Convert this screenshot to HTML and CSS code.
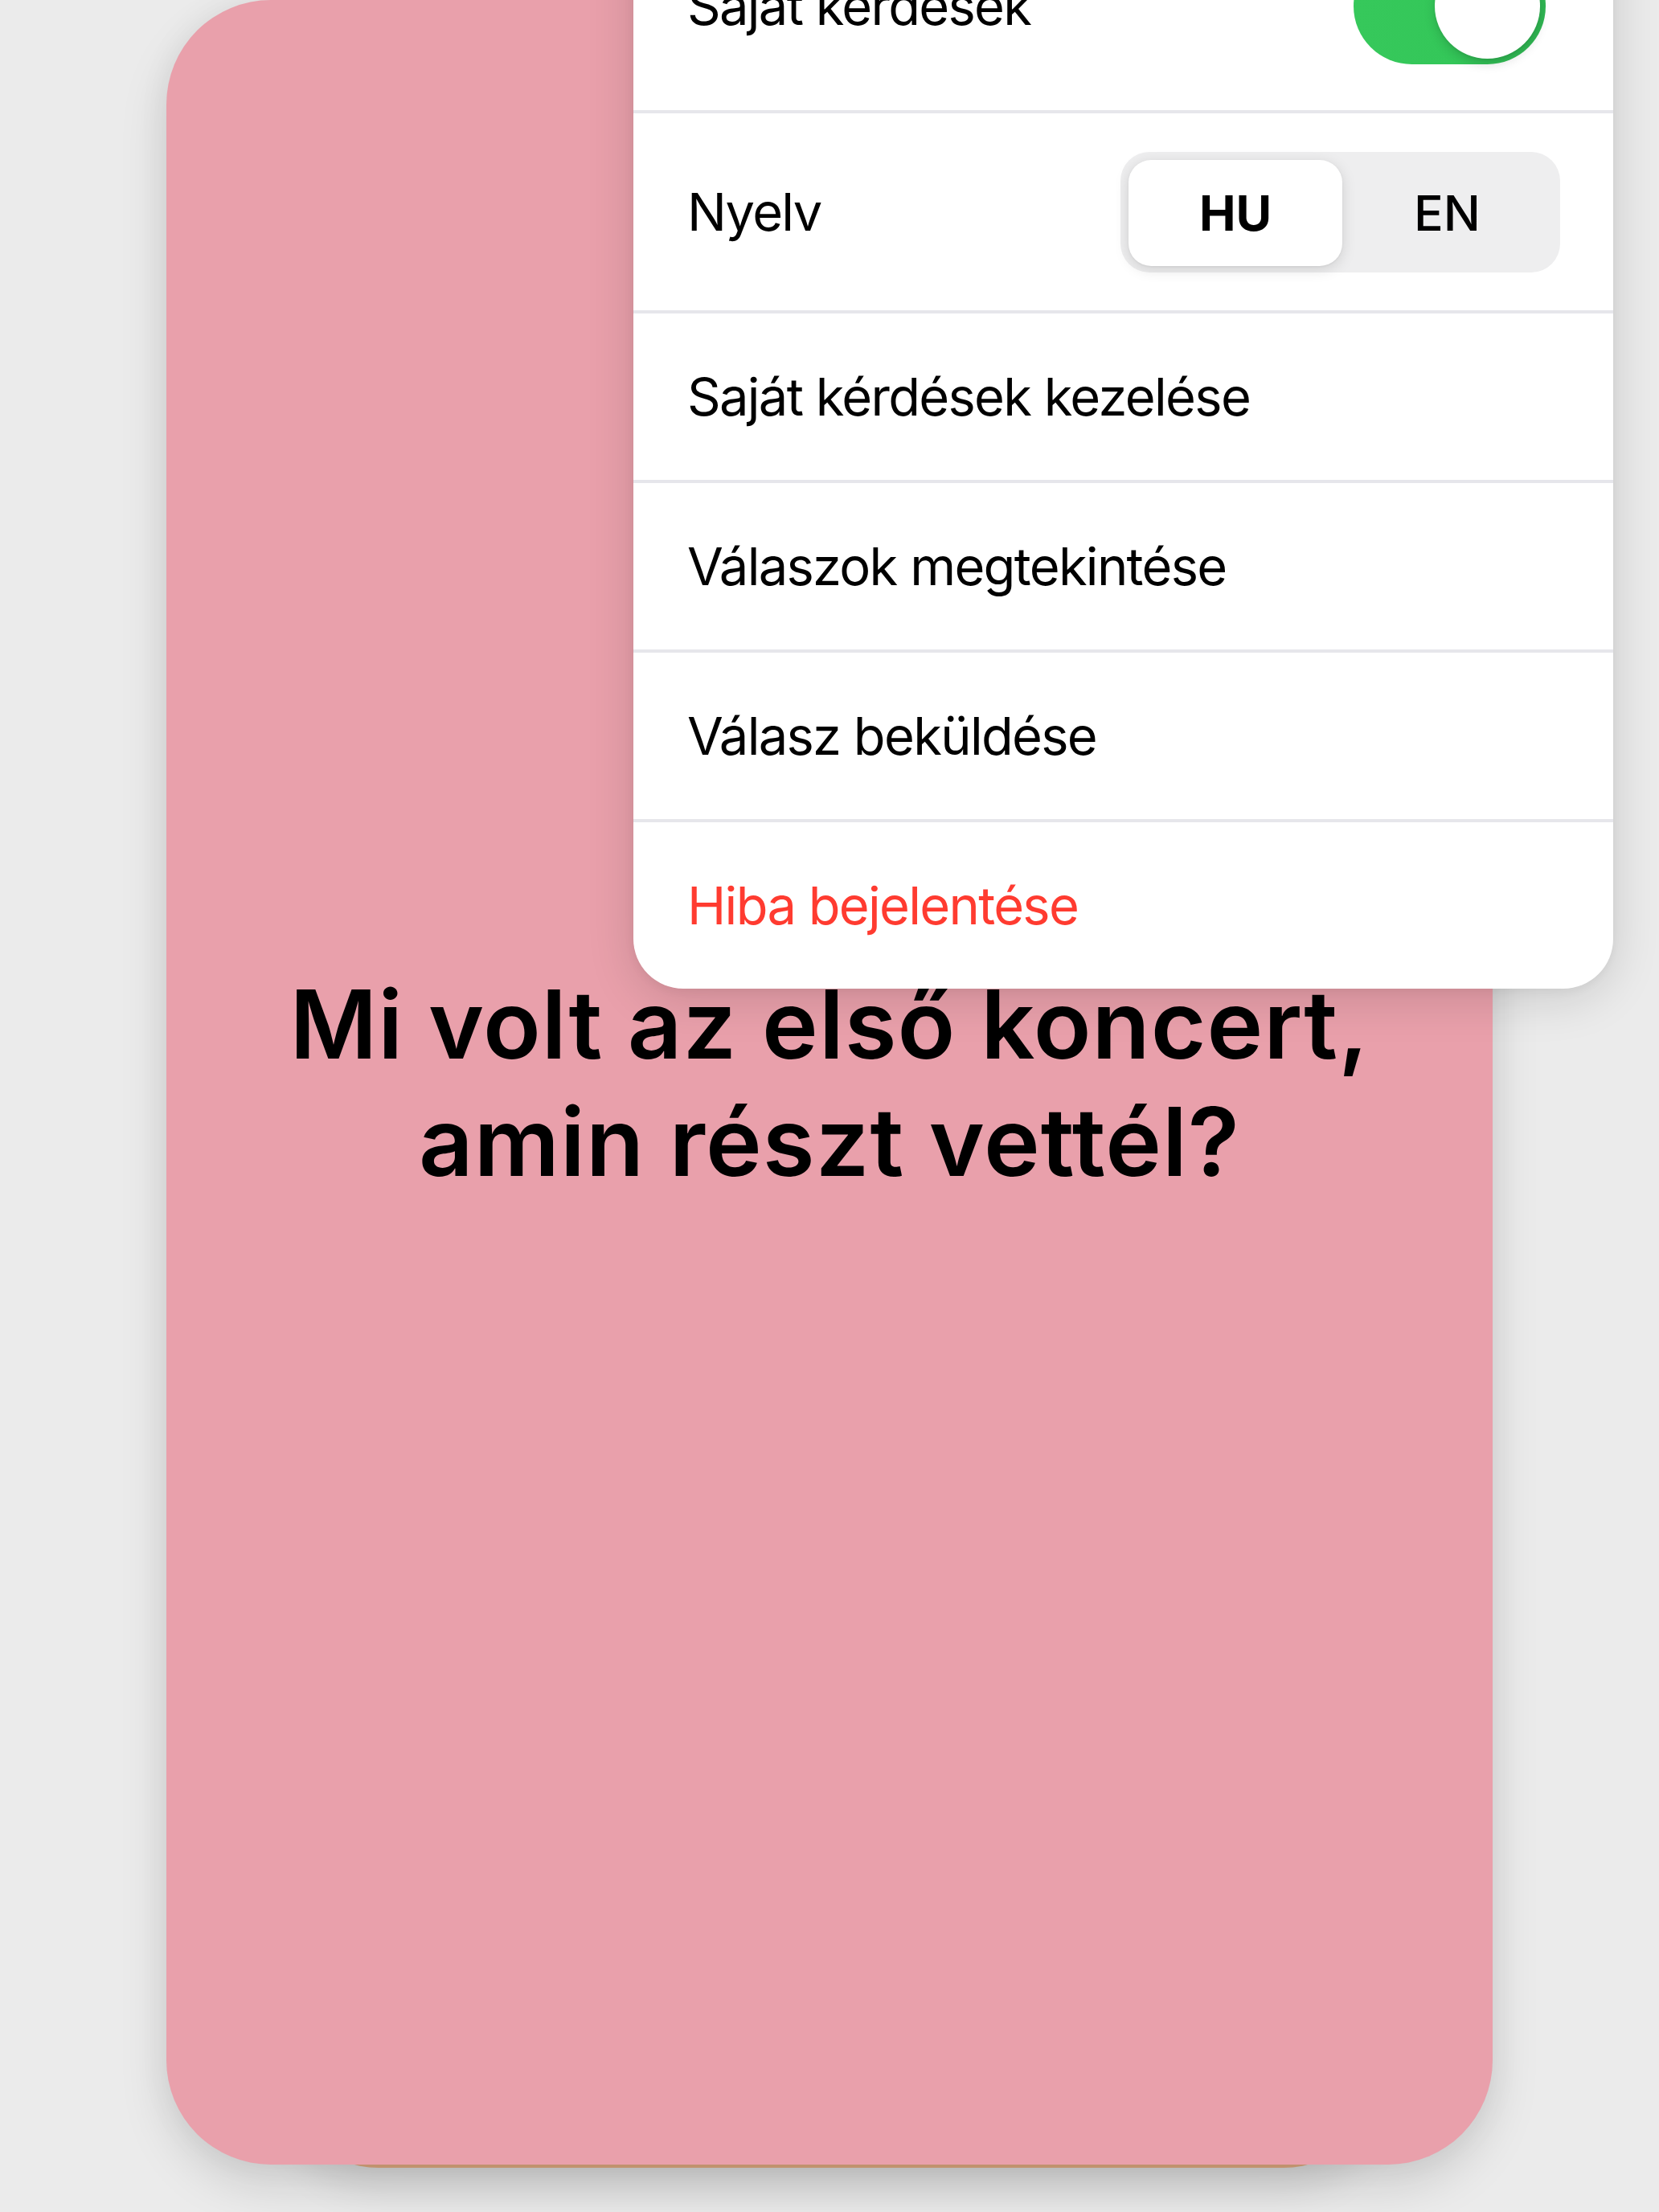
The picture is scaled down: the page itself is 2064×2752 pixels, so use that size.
FILE: index.html
```html
<!DOCTYPE html>
<html lang="hu">
<head>
<meta charset="utf-8">
<title>Kérdés</title>
<link rel="stylesheet" href="styles.css">
</head>
<body>
<div class="stage">
  <div class="deck">
    <div class="card-back"></div>
    <div class="card">
      <p class="question">Mi volt az első koncert, amin részt vettél?</p>
    </div>
  </div>
  <div class="menu">
    <div class="row row-first">
      <span class="label">Saját kérdések</span>
      <div class="switch"><span class="knob"></span></div>
    </div>
    <div class="row row-lang">
      <span class="label">Nyelv</span>
      <div class="seg">
        <span class="seg-item active">HU</span>
        <span class="seg-item">EN</span>
      </div>
    </div>
    <div class="row"><span class="label">Saját kérdések kezelése</span></div>
    <div class="row"><span class="label">Válaszok megtekintése</span></div>
    <div class="row"><span class="label">Válasz beküldése</span></div>
    <div class="row danger"><span class="label">Hiba bejelentése</span></div>
  </div>
</div>
</body>
</html>
```

FILE: styles.css
```css
* { box-sizing: border-box; }

html, body {
  margin: 0;
  padding: 0;
  width: 2064px;
  height: 2752px;
  overflow: hidden;
  background: #ebebeb;
  font-family: "Inter", "Noto Sans", "Liberation Sans", sans-serif;
  color: #000;
}

.stage {
  position: relative;
  width: 2064px;
  height: 2752px;
  padding-left: 207px;
}

.deck {
  position: relative;
  width: 1650px;
  height: 2693px;
}

.card-back {
  position: absolute;
  left: 144px;
  right: 140px;
  bottom: -4px;
  height: 300px;
  border-radius: 120px;
  background: #dca77e;
  box-shadow: 0 24px 50px rgba(0, 0, 0, 0.10);
}

.card {
  position: relative;
  width: 1650px;
  height: 2693px;
  border-radius: 130px;
  background: #e9a0ab;
  box-shadow: 0 26px 60px rgba(0, 0, 0, 0.13), 0 0 40px rgba(0, 0, 0, 0.05);
  display: flex;
  align-items: center;
  justify-content: center;
  padding: 0 90px;
}

.question {
  margin: 0;
  font-size: 118px;
  line-height: 146px;
  font-weight: 600;
  text-align: center;
  letter-spacing: 1px;
}

.menu {
  position: absolute;
  left: 788px;
  top: -123px;
  width: 1219px;
  background: #fff;
  border-radius: 62px;
  overflow: hidden;
  box-shadow: 0 12px 60px rgba(0, 0, 0, 0.14), 0 2px 14px rgba(0, 0, 0, 0.05);
}

.row {
  height: 211px;
  border-top: 4px solid #e6e6eb;
  display: flex;
  align-items: center;
  justify-content: space-between;
  padding: 0 66px 0 67px;
  font-size: 65px;
  font-weight: 400;
}

.label {
  letter-spacing: -1.7px;
}

.row-first {
  height: 260px;
  border-top: 0;
  padding-right: 84px;
}

.row-lang {
  height: 249px;
}

.danger .label { color: #ff3b30; }

.switch {
  width: 239px;
  height: 145px;
  border-radius: 73px;
  background: linear-gradient(90deg, #36c85b 0%, #34c759 55%, #2fb552 100%);
  display: flex;
  align-items: center;
  justify-content: flex-end;
  padding-right: 7px;
}

.knob {
  width: 131px;
  height: 131px;
  border-radius: 50%;
  background: #fff;
  box-shadow: 0 6px 14px rgba(0, 0, 0, 0.15), 0 2px 3px rgba(0, 0, 0, 0.06);
}

.seg {
  width: 547px;
  height: 150px;
  border-radius: 36px;
  background: #eeeeef;
  padding: 10px 10px 8px 10px;
  display: grid;
  grid-template-columns: 266px 1fr;
}

.seg-item {
  display: flex;
  align-items: center;
  justify-content: center;
  font-size: 61px;
  font-weight: 500;
  border-radius: 28px;
}

.seg-item.active {
  background: #fff;
  font-weight: 700;
  box-shadow: 0 4px 18px rgba(0, 0, 0, 0.13), 0 1px 3px rgba(0, 0, 0, 0.06);
}
```
